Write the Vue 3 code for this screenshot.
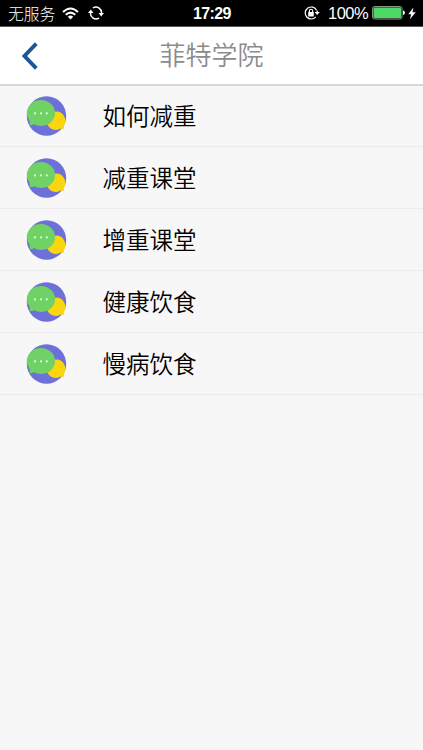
<template>
  <div class="page">
    <div class="status">
      <span class="carrier">无服务</span>
      <svg class="wifi" width="17" height="13" viewBox="0 0 17 13">
        <g fill="none" stroke="#fff" stroke-width="2">
          <path d="M1 5Q8.500 -2 16 5" />
          <path d="M3.700 7.800Q8.500 3.400 13.300 7.800" />
        </g>
        <path d="M5.800 9.700Q8.500 7.300 11.200 9.700L8.500 12.500Z" fill="#fff" />
      </svg>
      <svg class="sync" width="16" height="14" viewBox="0 0 16 14">
        <g fill="none" stroke="#fff" stroke-width="1.500">
          <path d="M5 1.900A5.500 5.500 0 0 1 13.300 7.800" />
          <path d="M11 12.100A5.500 5.500 0 0 1 2.700 6.200" />
        </g>
        <path d="M10.500 7H16L13.200 10.400ZM0 7H5.500L2.800 3.600Z" fill="#fff" />
      </svg>
      <span class="time">17:29</span>
      <svg class="lock" width="16" height="14" viewBox="0 0 16 14">
        <path d="M12.600 4.300A6 6 0 1 0 11.800 10.900" fill="none" stroke="#fff" stroke-width="1.200" />
        <path d="M10.600 5.900H15.800L13.200 9.100Z" fill="#fff" />
        <path d="M13.200 4.400V7" stroke="#fff" stroke-width="1.200" />
        <rect x="4.200" y="6" width="5.600" height="4.500" fill="#fff" />
        <path d="M5.400 6.300V4.800A1.600 1.600 0 0 1 8.600 4.800V6.300" fill="none" stroke="#fff" stroke-width="1.100" />
      </svg>
      <span class="percent">100%</span>
      <svg class="battery" width="33" height="14" viewBox="0 0 33 14">
        <rect x=".5" y=".5" width="29.500" height="12.500" rx="2" fill="#111" stroke="#8b938b" />
        <rect x="1.500" y="1.500" width="27.500" height="10.500" rx="1" fill="#4cd964" />
        <path d="M31 4.500Q33 5 33 6.800Q33 8.600 31 9Z" fill="#fff" />
      </svg>
      <svg class="bolt" width="8" height="13" viewBox="0 0 8 13">
        <path d="M5.400 .5L.3 7.200H3.200L1.900 12.300L7.700 5.200H4.500Z" fill="#fff" />
      </svg>
    </div>
    <div class="header">
      <button class="back" type="button">
        <svg width="18" height="28" viewBox="0 0 18 28">
          <path d="M15.300 1.700L3.500 14L15.300 26.300" fill="none" stroke="#1a5796" stroke-width="3.900" />
        </svg>
      </button>
      <h1 class="title">菲特学院</h1>
    </div>
    <div class="list">
      <div v-for="item in items" :key="item" class="row">
        <svg class="avatar" width="42" height="40" viewBox="0 0 42 40">
          <circle cx="21.500" cy="20" r="19.700" fill="#6c70d8" />
          <path d="M31.300 15.600A9.200 9.200 0 0 1 38.600 30.200Q38.700 31.400 39.400 32.400Q37.300 33.100 35.600 32.600A9.200 9.200 0 1 1 31.300 15.600Z" fill="#fbd50d" />
          <path d="M16 3.900A14 13 0 0 0 4.500 24.500Q5 27 4.500 29.300Q7 29.300 9.200 28.300Q12 30 16 30A14 13 0 0 0 16 3.900Z" fill="#70d164" />
          <g fill="#d9ffe0">
            <circle cx="10" cy="17.400" r="1.100" />
            <circle cx="16" cy="17.400" r="1.100" />
            <circle cx="21.800" cy="17.400" r="1.100" />
          </g>
        </svg>
        <span class="label">{{ item }}</span>
      </div>
    </div>
  </div>
</template>

<script setup>
const items = ['如何减重', '减重课堂', '增重课堂', '健康饮食', '慢病饮食']
</script>

<style>
body { margin: 0; background: #f7f7f7; }
</style>

<style scoped>
* { box-sizing: border-box; }
.page { width: 100%; min-height: 750px; background: #f7f7f7; font-family: 'Liberation Sans', 'Noto Sans CJK SC', sans-serif; }
.status { display: flex; align-items: center; height: 27px; background: #000; border-bottom: 1px solid #555; color: #fff; white-space: nowrap; }
.carrier { width: 54px; margin-left: 8px; padding-top: 1px; font-family: 'Noto Sans CJK SC', sans-serif; font-size: 15.800px; font-weight: 300; line-height: 26px; }
.sync { margin-left: 9px; }
.time { width: 40px; margin-left: 89px; padding-top: 2px; font-size: 16px; font-weight: 700; line-height: 26px; letter-spacing: -.6px; }
.lock { margin-left: 71px; }
.percent { width: 41px; margin-left: 8px; font-size: 16.500px; line-height: 26px; letter-spacing: -.5px; }
.battery { margin-left: 3px; }
.bolt { margin-left: 3px; }
.status svg { flex: none; }
.header { display: grid; grid-template-columns: 64px 1fr 64px; align-items: center; height: 59px; background: #fff; border-bottom: 2px solid #d9d9d9; }
.back { display: flex; padding: 0 0 0 21px; border: none; background: transparent; }
.title { margin: 0; font-size: 26px; font-weight: 350; line-height: 38px; color: #8c8c8c; text-align: center; }
.row { display: flex; align-items: center; height: 62px; padding-left: 25px; border-bottom: 1px solid #ececec; }
.row:first-child { height: 61px; }
.label { margin-left: 35.500px; padding-top: 2px; font-size: 23.500px; font-weight: 350; line-height: 34px; color: #000; }
</style>
